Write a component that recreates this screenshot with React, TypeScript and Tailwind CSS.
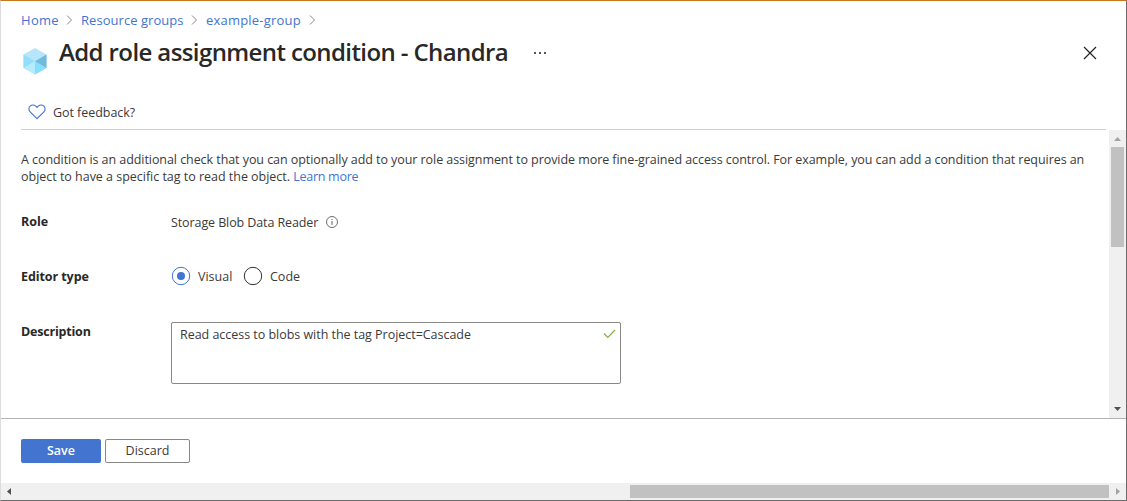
import React from "react";

function Separator() {
  return (
    <svg width="7" height="12" viewBox="0 0 7 12" fill="none" stroke="#8a8886" className="shrink-0">
      <path d="M1 1.500l4.500 4.500L1 10.500" />
    </svg>
  );
}

function Breadcrumbs() {
  return (
    <nav className="flex h-5 items-center text-[13px] leading-5 text-[#4374d0]">
      <a className="w-[45px] tracking-[0.3px]">Home</a>
      <Separator />
      <a className="ml-[8px] w-[110px] tracking-[0.05px]">Resource groups</a>
      <Separator />
      <a className="ml-[8px] w-[103px] tracking-[0.2px]">example-group</a>
      <Separator />
    </nav>
  );
}

function CubeIcon() {
  return (
    <svg width="24" height="27" viewBox="0 0 24 27" className="shrink-0">
      <path d="M12 0l11.500 6.600v13.300L12 26.500.5 19.900V6.600z" fill="#b7e6fb" />
      <path d="M.5 6.600L12 13.300.5 19.900z" fill="#92dffb" />
      <path d="M.5 19.900L12 13.300v13.200z" fill="#b3ebff" />
      <path d="M12 13.300l11.500 6.600L12 26.500z" fill="#86ddfd" />
      <path d="M23.500 6.600v13.300L12 13.300z" fill="#72b9da" />
    </svg>
  );
}

function Header() {
  return (
    <header className="flex h-[129px] shrink-0 flex-col pl-5 pr-5 pt-[9px]">
      <Breadcrumbs />
      <div className="flex h-[52px] shrink-0 items-start">
        <div className="ml-[1.500px] mt-[17.500px] w-[36.500px]">
          <CubeIcon />
        </div>
        <h1 className="mt-[6px] w-[474px] whitespace-nowrap text-[24px] font-[560] leading-[32px] tracking-[-0.6px] text-[#292827]">
          Add role assignment condition - Chandra
        </h1>
        <svg width="14" height="3" viewBox="0 0 14 3" fill="#55534f" className="mt-[22px]">
          <path d="M1 0h2v2H1zM6 0h2v2H6zM11 0h2v2h-2z" />
        </svg>
        <svg width="14" height="14" viewBox="0 0 14 14" fill="none" stroke="#222" strokeWidth="1.200" className="ml-auto mr-[9px] mt-[16px]">
          <path d="M1 1l12 12M13 1L1 13" />
        </svg>
      </div>
      <div className="flex h-12 shrink-0 items-center border-b border-[#d2d0ce] pl-[7px] pt-[14px]">
        <svg width="18" height="16" viewBox="0 0 18 16" fill="none" stroke="#4374d0" strokeWidth="1.100" className="mb-px">
          <path d="M9 14.700L2.100 7.900a4 4 0 0 1 0-5.700 4 4 0 0 1 5.700 0L9 3.400l1.200-1.200a4 4 0 0 1 5.700 0 4 4 0 0 1 0 5.700z" />
        </svg>
        <span className="ml-[7px] mt-px text-[12.500px] tracking-[-0.05px]">Got feedback?</span>
      </div>
    </header>
  );
}

function Radio({ label, checked = false }: { label: string; checked?: boolean }) {
  return (
    <span className="flex items-center">
      <svg width="20" height="20" viewBox="0 0 20 20" fill="none" className="mb-[2px]">
        <circle cx="10" cy="10" r="8.700" stroke={checked ? "#4374d0" : "#323130"} />
        {checked && <circle cx="10" cy="10" r="4" fill="#4374d0" />}
      </svg>
      <span className="ml-[7px]">{label}</span>
    </span>
  );
}

function VerticalScrollbar() {
  return (
    <div className="flex w-[17px] shrink-0 flex-col items-center bg-[#f0f0f0]">
      <svg width="7" height="4" viewBox="0 0 7 4" fill="#a3a3a3" className="mt-[7px]">
        <path d="M3.500 0L7 4H0z" />
      </svg>
      <div className="mt-[6px] h-[100px] w-[13px] bg-[#c1c1c1]" />
      <svg width="7" height="4" viewBox="0 0 7 4" fill="#505050" className="mb-[7px] mt-auto">
        <path d="M0 0h7L3.500 4z" />
      </svg>
    </div>
  );
}

function HorizontalScrollbar() {
  return (
    <div className="flex h-[17px] items-center bg-[#f0f0f0]">
      <svg width="4" height="7" viewBox="0 0 4 7" fill="#505050" className="ml-[6px]">
        <path d="M4 0v7L0 3.500z" />
      </svg>
      <div className="ml-auto h-[13px] w-[479px] bg-[#c1c1c1]" />
      <svg width="4" height="7" viewBox="0 0 4 7" fill="#a3a3a3" className="ml-[7px] mr-[6px]">
        <path d="M0 0l4 3.500L0 7z" />
      </svg>
    </div>
  );
}

export default function App() {
  return (
    <div className="flex h-[501px] w-[1127px] flex-col overflow-hidden border border-b-[#6b6b6b] border-l-[#dcdcdc] border-r-[#6b6b6b] border-t-[#c8761a] bg-white font-['Open_Sans','Noto_Sans',sans-serif] text-[12.500px] text-[#3b3a39]">
      <Header />
      <div className="flex h-[288px]">
        <main className="flex-1 pl-5 pt-[21px]">
          <p className="whitespace-nowrap leading-[17px]">
            <span className="tracking-[-0.062px]">A condition is an additional check that you can optionally add to your role assignment to provide more fine-grained access control. For example, you can add a condition that requires an</span>
            <br />
            <span className="tracking-[-0.02px]">object to have a specific tag to read the object. </span>
            <a className="tracking-[-0.28px] text-[#4374d0]">Learn more</a>
          </p>
          <div className="mt-[27px] flex h-[20px] items-center">
            <span className="w-[150px] font-bold tracking-[-0.05px] text-[#292827]">Role</span>
            <span className="mt-[2px] w-[155px] tracking-[-0.1px]">Storage Blob Data Reader</span>
            <svg width="12" height="12" viewBox="0 0 12 12" fill="none" stroke="#605e5c">
              <circle cx="6" cy="6" r="5.500" strokeWidth=".9" />
              <path d="M6 5v4M6 3v1" />
            </svg>
          </div>
          <div className="mt-[35px] flex h-[20px] items-center">
            <span className="w-[150px] font-bold tracking-[-0.08px] text-[#292827]">Editor type</span>
            <div className="w-[72px]">
              <Radio label="Visual" checked />
            </div>
            <Radio label="Code" />
          </div>
          <div className="mt-[35px] flex">
            <span className="mt-px w-[150px] font-bold leading-[18px] tracking-[-0.2px] text-[#292827]">Description</span>
            <div className="flex h-[62px] w-[450px] items-start justify-between rounded-[2px] border border-[#8a8886] pl-2 pr-[4px] pt-[3px]">
              <span className="leading-[18px] tracking-[-0.03px]">Read access to blobs with the tag Project=Cascade</span>
              <svg width="13" height="10" viewBox="0 0 13 10" fill="none" stroke="#7fb239" strokeWidth="1.200" className="mt-[3px]">
                <path d="M1 4.500l3.800 4 7.200-7.500" />
              </svg>
            </div>
          </div>
        </main>
        <VerticalScrollbar />
      </div>
      <footer className="flex h-[65px] gap-1 border-t border-[#b3b3b3] pl-5 pt-5">
        <button className="h-6 w-20 rounded-[2px] bg-[#4374d0] font-semibold text-white">Save</button>
        <button className="h-6 w-[85px] rounded-[2px] border border-[#8a8886] font-medium">Discard</button>
      </footer>
      <HorizontalScrollbar />
    </div>
  );
}
